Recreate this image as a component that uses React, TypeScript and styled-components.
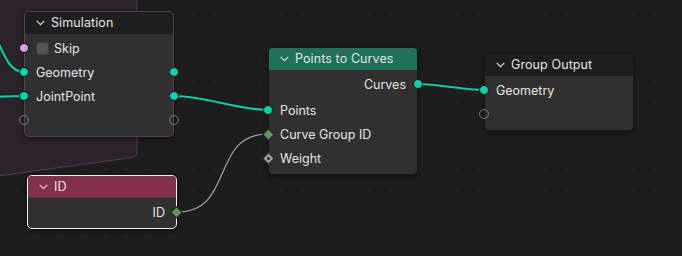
import React from "react";
import styled, { createGlobalStyle } from "styled-components";

const Global = createGlobalStyle`
  html, body { margin: 0; padding: 0; background: #1d1d1d; }
  body { font-family: Inter, "Noto Sans", "DejaVu Sans", sans-serif; }
`;

const Canvas = styled.div`
  position: relative;
  width: 682px;
  height: 256px;
  overflow: hidden;
  background-color: #1d1d1d;
  background-image: radial-gradient(circle, #242424 0.8px, transparent 1.2px);
  background-size: 22px 22px;
  background-position: 6px 4px;
`;

const Layer = styled.svg`
  position: absolute;
  left: 0;
  top: 0;
  width: 682px;
  height: 256px;
  overflow: visible;
`;

const Node = styled.div<{ $x: number; $y: number; $border: string }>`
  position: absolute;
  left: ${(p) => p.$x}px;
  top: ${(p) => p.$y}px;
  width: 150px;
  box-sizing: border-box;
  border: 1px solid ${(p) => p.$border};
  border-radius: 5px;
  background: #303030;
  box-shadow: 0 2px 5px rgba(0, 0, 0, 0.45);
  display: flex;
  flex-direction: column;
`;

const Header = styled.div<{ $bg: string; $line?: string }>`
  height: 22px;
  box-sizing: border-box;
  display: flex;
  align-items: center;
  gap: 6px;
  padding-left: 11px;
  background: ${(p) => p.$bg};
  border-radius: 4px 4px 0 0;
  border-bottom: 1px solid ${(p) => p.$line || p.$bg};
  color: #e4e4e4;
  font-size: 12.5px;
  letter-spacing: 0.1px;
`;

const Body = styled.div`
  position: relative;
  display: flex;
  flex-direction: column;
  padding: 2px 0 4px;
`;

const Row = styled.div<{ $right?: boolean; $gapAfter?: number }>`
  position: relative;
  height: 24px;
  display: flex;
  align-items: center;
  justify-content: ${(p) => (p.$right ? "flex-end" : "flex-start")};
  gap: 5px;
  padding: 0 11px;
  margin-bottom: ${(p) => p.$gapAfter || 0}px;
  color: #e4e4e4;
  font-size: 12.5px;
`;

const Socket = styled.span<{ $side: "left" | "right"; $color: string; $empty?: boolean }>`
  position: absolute;
  top: 50%;
  ${(p) => p.$side}: -6px;
  width: 10px;
  height: 10px;
  margin-top: -5.5px;
  border-radius: 50%;
  box-sizing: border-box;
  background: ${(p) => (p.$empty ? "transparent" : p.$color)};
  border: ${(p) => (p.$empty ? "1.3px solid #7a7a7a" : "1px solid #101010")};
`;

const Diamond = styled.span<{ $side: "left" | "right"; $color: string; $dot?: boolean }>`
  position: absolute;
  top: 50%;
  ${(p) => p.$side}: -5px;
  width: 7px;
  height: 7px;
  margin-top: -4.5px;
  transform: rotate(45deg);
  background: ${(p) => p.$color};
  border: 1px solid #121212;
  &::after {
    content: "";
    display: ${(p) => (p.$dot ? "block" : "none")};
    position: absolute;
    left: 2px;
    top: 2px;
    width: 3px;
    height: 3px;
    background: #2a2a2a;
  }
`;

const Check = styled.span`
  width: 13px;
  height: 13px;
  border-radius: 3px;
  background: #545454;
  border: 1px solid #3c3c3c;
  box-sizing: border-box;
`;

const Chevron = () => (
  <svg width="9" height="6" viewBox="0 0 9 6">
    <polyline points="0.7,0.8 4.5,4.6 8.3,0.8" fill="none" stroke="#dcdcdc" strokeWidth="1.2" />
  </svg>
);

const GREEN = "#00d6a3";
const FIELD = "#5f955f";

export default function App() {
  return (
    <Canvas>
      <Global />
      <Layer>
        <path
          d="M -10 -10 L 137 -10 L 137 152 Q 137 157 132 157.6 L -10 177 Z"
          fill="#2a2329"
          stroke="#5a3a56"
          strokeWidth="1"
        />
        <g fill="none" strokeLinecap="round">
          <path d="M -40 8 C 2 8, -4 72, 24 72" stroke="#151515" strokeWidth="4" />
          <path d="M -40 8 C 2 8, -4 72, 24 72" stroke={GREEN} strokeWidth="2.2" />
          <path d="M -20 97 L 24 96" stroke="#151515" strokeWidth="4" />
          <path d="M -20 97 L 24 96" stroke={GREEN} strokeWidth="2.2" />
          <path d="M 175 96 C 205 96, 238 110, 268 110" stroke="#151515" strokeWidth="4" />
          <path d="M 175 96 C 205 96, 238 110, 268 110" stroke={GREEN} strokeWidth="2.2" />
          <path d="M 418 84 C 440 84, 462 90, 484 90" stroke="#151515" strokeWidth="4" />
          <path d="M 418 84 C 440 84, 462 90, 484 90" stroke={GREEN} strokeWidth="2.2" />
          <path d="M 177 212 C 235 212, 210 134, 268 134" stroke="#a9aba9" strokeWidth="1.1" />
        </g>
      </Layer>

      <Node $x={24} $y={11} $border="#5c3d58">
        <Header $bg="#1e1e1e">
          <Chevron />
          Simulation
        </Header>
        <Body>
          <Row>
            <Socket $side="left" $color="#c9a3d3" />
            <Check />
            Skip
          </Row>
          <Row>
            <Socket $side="left" $color={GREEN} />
            Geometry
            <Socket $side="right" $color={GREEN} />
          </Row>
          <Row>
            <Socket $side="left" $color={GREEN} />
            JointPoint
            <Socket $side="right" $color={GREEN} />
          </Row>
          <Row>
            <Socket $side="left" $color="" $empty />
            <Socket $side="right" $color="" $empty />
          </Row>
        </Body>
      </Node>

      <Node $x={268} $y={47} $border="#181818">
        <Header $bg="#1f7159">
          <Chevron />
          Points to Curves
        </Header>
        <Body>
          <Row $right $gapAfter={2}>
            Curves
            <Socket $side="right" $color={GREEN} />
          </Row>
          <Row>
            <Socket $side="left" $color={GREEN} />
            Points
          </Row>
          <Row>
            <Diamond $side="left" $color={FIELD} />
            Curve Group ID
          </Row>
          <Row>
            <Diamond $side="left" $color="#a5a5a5" $dot />
            Weight
          </Row>
        </Body>
      </Node>

      <Node $x={484} $y={53} $border="#181818">
        <Header $bg="#1e1e1e">
          <Chevron />
          Group Output
        </Header>
        <Body>
          <Row>
            <Socket $side="left" $color={GREEN} />
            Geometry
          </Row>
          <Row>
            <Socket $side="left" $color="" $empty />
          </Row>
        </Body>
      </Node>

      <Node $x={27} $y={175} $border="#f0f0f0">
        <Header $bg="#83314b" $line="#6e2a3f">
          <Chevron />
          ID
        </Header>
        <Body>
          <Row $right>
            ID
            <Diamond $side="right" $color={FIELD} />
          </Row>
        </Body>
      </Node>
    </Canvas>
  );
}
